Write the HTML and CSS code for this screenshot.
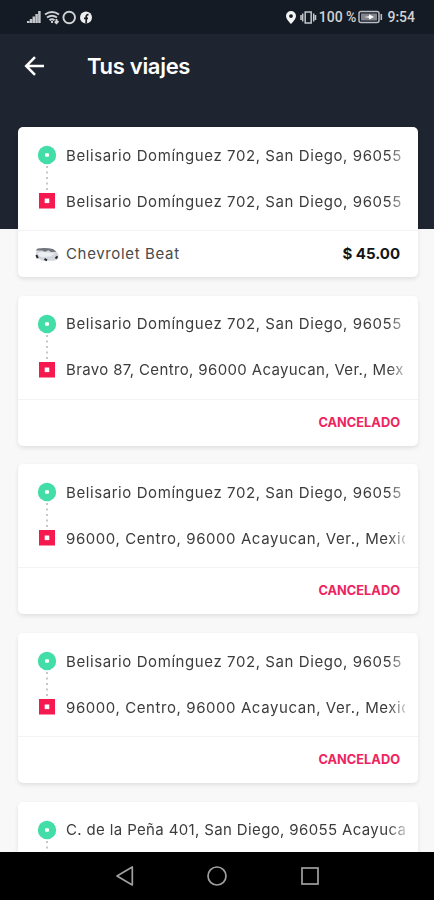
FILE: index.html
```
<!DOCTYPE html>
<html lang="es">
<head>
    <meta charset="UTF-8">
    <meta name="viewport" content="width=device-width, initial-scale=1.0">
    <title>Tus viajes</title>
    <link rel="stylesheet" href="styles.css">
</head>
<body>

    <div class="screen">
        <div class="status-bar">
            <svg class="status-left" width="68" height="16" viewBox="0 0 68 16">
                <!-- Signal, wifi, circle, facebook -->
                <path d="M2.200 14v-2M5 14v-4M7.800 14V7.500M10.600 14V5M13.400 14V2" stroke="#c3c6ca" stroke-width="2.500"/>
                <g fill="none" stroke="#d0d2d5" stroke-width="1.900">
                    <path d="M19 5.500q7-5 14 0M21 8.500q5-3.500 10 0M23.500 11.300q2.500-2 5 0"/>
                    <path d="M26 12v2M30.500 10v4M28.800 12.500l1.700 1.700 2-2"/>
                    <circle cx="43.200" cy="8.500" r="5.800"/>
                </g>
                <circle cx="60" cy="8.500" r="6" fill="#eee"/>
                <path d="M60.200 14.500V7.500q0-2 2.300-1.800M58 9.300h4" fill="none" stroke="#171c26" stroke-width="1.700"/>
            </svg>
            <div class="status-right">
                <svg width="32" height="16" viewBox="0 0 32 16">
                    <path fill-rule="evenodd" d="M6 2a5 5 0 0 0-5 5c0 3.300 5 8 5 8s5-4.700 5-8a5 5 0 0 0-5-5zm0 3.200a1.900 1.900 0 1 1 0 3.800 1.900 1.900 0 0 1 0-3.800z" fill="#f4f4f4"/>
                    <path d="M20.200 3h6v11h-6zM17.700 4.500v8M28.700 4.500v8M16 6v5M30.500 6v5" fill="none" stroke="#c3c6ca" stroke-width="1.500"/>
                </svg>
                <span class="battery-text">100 %</span>
                <svg width="25" height="14" viewBox="0 0 25 14">
                    <rect x="1" y="1.500" width="20" height="11" rx="2" fill="none" stroke="#b9bcc1" stroke-width="1.500"/>
                    <rect x="3" y="3.500" width="16" height="7" fill="#81858b"/>
                    <path d="M6 7l5-.8V4.200l5 2.800-5 2.500V7.800z" fill="#fff"/>
                    <path d="M23.300 4v6" stroke="#b9bcc1" stroke-width="1.600"/>
                </svg>
                <span class="clock">9:54</span>
            </div>
        </div>

        <div class="header">
            <svg class="back" width="22" height="22" viewBox="0 0 22 22">
                <path d="M20 11H2.500M11 2.200L2.200 11l8.800 8.800" fill="none" stroke="#fff" stroke-width="2.500"/>
            </svg>
            <div class="title">Tus viajes</div>
        </div>

        <div class="trips" id="trips">
            <!-- Trip cards are generated here -->
        </div>

        <div class="nav-bar">
            <svg width="20" height="22" viewBox="0 0 20 22">
                <path d="M17.300 2v18L2 11z" fill="none" stroke="#a0a0a0" stroke-width="1.700" stroke-linejoin="round"/>
            </svg>
            <svg width="22" height="22" viewBox="0 0 22 22">
                <circle cx="11" cy="11" r="9" fill="none" stroke="#a0a0a0" stroke-width="1.700"/>
            </svg>
            <svg width="20" height="20" viewBox="0 0 20 20">
                <rect x="2" y="2" width="16" height="16" fill="none" stroke="#a0a0a0" stroke-width="1.700"/>
            </svg>
        </div>
    </div>

    <script>
        const trips = [
            { from: 'Belisario Domínguez 702, San Diego, 96055', to: 'Belisario Domínguez 702, San Diego, 96055', car: 'Chevrolet Beat', price: '$ 45.00' },
            { from: 'Belisario Domínguez 702, San Diego, 96055', to: 'Bravo 87, Centro, 96000 Acayucan, Ver., Mex' },
            { from: 'Belisario Domínguez 702, San Diego, 96055', to: '96000, Centro, 96000 Acayucan, Ver., Mexic' },
            { from: 'Belisario Domínguez 702, San Diego, 96055', to: '96000, Centro, 96000 Acayucan, Ver., Mexic' },
            { from: 'C. de la Peña 401, San Diego, 96055 Acayuca', to: '' }
        ];

        const routeIcon = `
            <svg class="route" width="20" height="66" viewBox="0 0 20 66">
                <path d="M10 21v26" stroke="#aaa" stroke-width="1.300" stroke-dasharray="2 3.500"/>
                <circle cx="10" cy="10" r="9.200" fill="#43dda8"/>
                <rect x="8" y="8.200" width="4" height="3.600" rx="1" fill="#fff"/>
                <rect x="2" y="48" width="16" height="15.500" fill="#f5194f"/>
                <rect x="7.700" y="53.500" width="4.600" height="4.600" fill="#fff"/>
            </svg>
        `;

        const carIcon = `
            <svg class="car" width="24" height="16" viewBox="0 0 24 16">
                <path d="M1 6L5 3q8-1.300 13 .8l4.500 3 1 2.500-.5 4-4 1.500H8L1 12z" fill="#d3d6dd"/>
                <path d="M.6 4.500L2.500 2.500q8-1.300 15.500.5l3.500 2.700-5.500.3-2.500-1.700L10 5.700 7 4.500z" fill="#70747b"/>
                <path d="M2 7.500l4-1.500 7.500.5 6.500 1-5 3-9 .5z" fill="#eceef2"/>
                <path d="M1.300 9l1.500 3.200M9.500 13l2.500 1.300M20.500 12.500l2-2.200" stroke="#24272c" stroke-width="2"/>
            </svg>
        `;

        // Long addresses get slightly tighter letters
        function addressRow(text) {
            const tight = text.length > 42 ? ' address-tight' : '';
            return `<div class="address${tight}">${text}</div>`;
        }

        // One card: route on top, price or cancelled label below
        document.getElementById('trips').innerHTML = trips.map(trip => `
            <div class="card">
                <div class="places">
                    ${routeIcon}
                    <div class="addresses">
                        ${addressRow(trip.from)}
                        ${addressRow(trip.to)}
                    </div>
                </div>
                <div class="card-footer">
                    ${trip.car ? carIcon + `<span class="car-name">${trip.car}</span><span class="price">${trip.price}</span>` : '<span class="cancelled">CANCELADO</span>'}
                </div>
            </div>
        `).join('');
    </script>

</body>
</html>
```
FILE: styles.css
```
body {
    margin: 0;
    font-family: Inter, Roboto, sans-serif;
    background-color: #000;
}

.screen {
    display: flex;
    flex-direction: column;
    height: 900px;
    overflow: hidden;
    background: linear-gradient(#1e2430 229px, #f8f8f8 229px);
}

.status-bar {
    display: flex;
    justify-content: space-between;
    align-items: center;
    box-sizing: border-box;
    height: 34px;
    flex-shrink: 0;
    padding: 0 19px 0 26px;
    background-color: #151b24;
    color: #d0d2d5;
}

.status-right {
    display: flex;
    align-items: center;
}

.battery-text {
    margin: 0 2px;
    font-family: Roboto, sans-serif;
    font-size: 14px;
    font-weight: 500;
}

.clock {
    margin-left: 4px;
    font-family: Roboto, sans-serif;
    font-size: 14px;
    font-weight: 500;
}

.header {
    display: flex;
    align-items: center;
    height: 64px;
    flex-shrink: 0;
    padding-left: 24px;
}

.title {
    margin-left: 41px;
    font-size: 22px;
    font-weight: 600;
    letter-spacing: -0.3px;
    color: #fff;
}

.trips {
    flex: 1;
    min-height: 0;
    overflow: hidden;
    display: flex;
    flex-direction: column;
    gap: 18.7px;
    padding: 29px 16px 0 17.5px;
}

.card {
    height: 150px;
    flex-shrink: 0;
    background-color: #fff;
    border-radius: 5px;
    box-shadow: 0 2px 4px rgba(0, 0, 0, 0.1);
}

.places {
    display: flex;
    height: 103px;
    border-bottom: 1px solid #f3f3f3;
}

.route {
    flex-shrink: 0;
    margin: 18px 9.500px 0 19px;
}

.addresses {
    flex: 1;
    min-width: 0;
    margin-right: 13px;
    padding-top: 5.5px;
}

.address {
    height: 46px;
    line-height: 46px;
    overflow: hidden;
    white-space: nowrap;
    font-size: 15px;
    letter-spacing: 0.58px;
    color: #3c3c3c;
    -webkit-mask-image: linear-gradient(to right, #000 95%, rgba(0, 0, 0, 0.3));
    mask-image: linear-gradient(to right, #000 95%, rgba(0, 0, 0, 0.3));
}

.address-tight {
    letter-spacing: 0.36px;
}

.card-footer {
    display: flex;
    align-items: center;
    height: 45px;
    padding: 0 18px 0 17px;
}

.car {
    margin-right: 7.500px;
}

.car-name {
    font-size: 15px;
    letter-spacing: 0.65px;
    color: #4a4a4a;
}

.price {
    margin-left: auto;
    font-size: 15px;
    font-weight: 700;
    color: #151515;
}

.cancelled {
    margin-left: auto;
    font-size: 12.8px;
    font-weight: 700;
    color: #ee2460;
}

.nav-bar {
    display: flex;
    justify-content: center;
    align-items: center;
    gap: 71.500px;
    height: 48px;
    flex-shrink: 0;
    background-color: #000;
}
```
